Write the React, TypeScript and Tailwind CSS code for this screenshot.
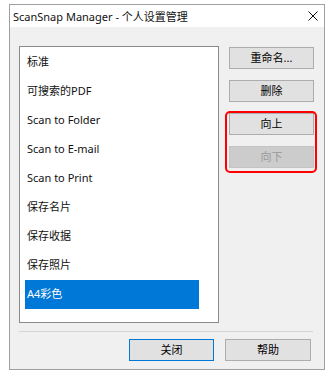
const font = { fontFamily: '"Noto Sans", "Noto Sans CJK SC", sans-serif' }

const items = [
  '标准',
  '可搜索的PDF',
  'Scan to Folder',
  'Scan to E-mail',
  'Scan to Print',
  '保存名片',
  '保存收据',
  '保存照片',
  'A4彩色',
]

function Button({ label, disabled, primary }: { label: string; disabled?: boolean; primary?: boolean }) {
  return (
    <div
      className={
        'h-[22px] flex items-center justify-center text-[11px] border ' +
        (disabled
          ? 'bg-[#cccccc] border-[#c4c4c4] text-[#9a9a9a]'
          : primary
            ? 'bg-[#e1e1e1] border-[#0078d7] text-black'
            : 'bg-[#e1e1e1] border-[#adadad] text-black')
      }
    >
      {label}
    </div>
  )
}

export default function App() {
  return (
    <div className="w-[333px] h-[376px] bg-white pt-[4px] pl-[9px]" style={font}>
      <div className="w-[316px] h-[366px] border border-[#a0a0a0] flex flex-col">
        {/* Title bar */}
        <div className="h-[22px] bg-white flex items-center justify-between pl-[3px] pr-[5px]">
          <span className="text-[11px] text-[#111] leading-none">ScanSnap Manager - 个人设置管理</span>
          <svg width="10" height="10" viewBox="0 0 10 10" className="mr-[1px]">
            <path d="M0.5 0.5 L9.5 9.5 M9.5 0.5 L0.5 9.5" stroke="#111" strokeWidth="1" />
          </svg>
        </div>

        {/* Body */}
        <div className="flex-1 bg-[#f0f0f0] pl-[9px] pt-[19px] flex flex-col">
          <div className="flex">
            {/* Profile list */}
            <div className="w-[200px] h-[277px] bg-white border border-[#8a8a8a] pt-[1px]">
              {items.map((item, i) => {
                const selected = i === items.length - 1
                return (
                  <div
                    key={item}
                    className={
                      'ml-[5px] w-[174px] h-[29px] flex items-center pl-[2px] text-[11px] ' +
                      (selected ? 'bg-[#0078d7] text-white' : 'text-[#111]')
                    }
                  >
                    {item}
                  </div>
                )
              })}
            </div>

            {/* Side buttons */}
            <div className="relative ml-[10px] mt-[1px] w-[85px] flex flex-col gap-[11px]">
              <Button label="重命名..." />
              <Button label="删除" />
              <Button label="向上" />
              <Button label="向下" disabled />
              <div className="absolute left-[-4px] top-[64px] w-[92px] h-[62px] border-2 border-[#ff0000] rounded-[5px]" />
            </div>
          </div>

          <div className="mt-[8px] w-[294px] h-px bg-[#d4d4d4]" />

          {/* Bottom buttons */}
          <div className="mt-[7px] flex justify-end gap-[11px] pr-[13px]">
            <div className="w-[85px]">
              <Button label="关闭" primary />
            </div>
            <div className="w-[86px]">
              <Button label="帮助" />
            </div>
          </div>
        </div>
      </div>
    </div>
  )
}
